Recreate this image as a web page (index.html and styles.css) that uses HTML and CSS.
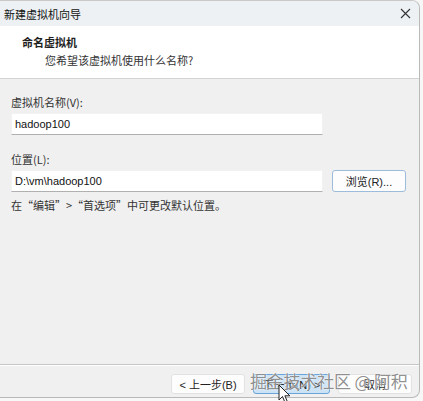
FILE: index.html
```html
<!DOCTYPE html>
<html lang="zh-CN">
<head>
  <meta charset="UTF-8" />
  <title>新建虚拟机向导</title>
  <link rel="stylesheet" href="styles.css">
</head>
<body>

<div class="window">
  <div class="titlebar">
    <span class="title">新建虚拟机向导</span>
    <svg class="close" width="11" height="11" viewBox="0 0 11 11">
      <path d="M1 1 L10 10 M10 1 L1 10" stroke="#333" stroke-width="1.1" fill="none" />
    </svg>
  </div>

  <div class="header">
    <div class="step">命名虚拟机</div>
    <div class="hint">您希望该虚拟机使用什么名称?</div>
  </div>

  <div class="content">
    <label class="label">虚拟机名称(V):</label>
    <div class="row">
      <input class="field" type="text" value="hadoop100" />
    </div>

    <label class="label">位置(L):</label>
    <div class="row">
      <input class="field" type="text" value="D:\vm\hadoop100" />
      <button class="btn browse">浏览(R)...</button>
    </div>
    <p class="note">在“编辑”>“首选项”中可更改默认位置。</p>
  </div>

  <div class="footer">
    <button class="btn">&lt; 上一步(B)</button>
    <button class="btn primary">下一步(N) &gt;</button>
    <button class="btn">取消</button>
  </div>
</div>

<!-- watermark and mouse pointer sit over the dialog -->
<div class="watermark">掘金技术社区 @ 阿积</div>
<svg class="pointer" width="13" height="20" viewBox="0 0 13 20">
  <path d="M1 1 L1 16 L4.5 12.5 L7 18.5 L9.3 17.5 L6.9 11.8 L11.8 11.8 Z" fill="#fff" stroke="#222" stroke-width="1" stroke-linejoin="round" />
</svg>

</body>
</html>
```

FILE: styles.css
```css
body {
  margin: 0;
  width: 423px;
  height: 401px;
  overflow: hidden;
  position: relative;
  background: #f7f7f7;
  font-family: "Liberation Sans", "Noto Sans CJK SC", sans-serif;
  font-size: 11px;
  color: #1e1e1e;
}

.window {
  width: 420px;
  height: 398px;
  display: flex;
  flex-direction: column;
  background: #f0f0f0;
  border-right: 1px solid #b9b9b9;
  border-bottom: 1px solid #b9b9b9;
  border-top: 1px solid #c9c9c9;
  border-radius: 0 8px 8px 0;
  overflow: hidden;
  box-sizing: border-box;
}

.titlebar {
  height: 25px;
  flex: none;
  display: flex;
  align-items: center;
  justify-content: space-between;
  padding: 0 8px 0 4px;
  background: #edf1f4;
}

.title {
  font-family: "Noto Sans CJK SC", sans-serif;
  font-size: 11px;
  color: #111;
}

.header {
  height: 53px;
  flex: none;
  background: #fff;
  border-bottom: 1px solid #d4d4d4;
  padding: 9px 0 0 22px;
  box-sizing: border-box;
  font-family: "Noto Sans CJK SC", sans-serif;
}

.step {
  font-weight: bold;
  font-size: 11px;
  line-height: 15px;
}

.hint {
  margin: 3px 0 0 23px;
  line-height: 15px;
  color: #333;
}

.content {
  flex: 1;
  padding: 16px 10px 0 11px;
}

.label {
  display: block;
  font-family: "Noto Sans CJK SC", sans-serif;
  line-height: 14px;
  color: #333;
}

.row {
  display: flex;
  align-items: center;
  gap: 9px;
  margin: 4px 0 17px;
}

.field {
  width: 312px;
  height: 22px;
  flex: none;
  box-sizing: border-box;
  margin: 0;
  padding: 0 3px;
  border: 1px solid #f2f2f2;
  border-bottom-color: #b0b0b0;
  background: #fff;
  font-family: "Liberation Sans", sans-serif;
  font-size: 11px;
  color: #111;
  outline: none;
}

.btn {
  height: 20px;
  padding: 0;
  width: 74px;
  flex: none;
  border: 1px solid #e2e2e2;
  border-radius: 3px;
  background: #fdfdfd;
  font-family: "Liberation Sans", "Noto Sans CJK SC", sans-serif;
  font-size: 11px;
  color: #222;
}

.browse {
  height: 22px;
  border-color: #9dbcdc;
}

.note {
  margin: 0;
  margin-top: -12px;
  font-family: "Noto Sans CJK SC", sans-serif;
  color: #333;
}

.footer {
  height: 33px;
  flex: none;
  display: flex;
  justify-content: flex-end;
  align-items: flex-start;
  gap: 8px;
  padding: 9px 7px 0 0;
  box-sizing: border-box;
  border-top: 1px solid #c6c6c6;
  box-shadow: inset 0 1px 0 #fff;
}

.primary {
  width: 77px;
  background: #cce3f6;
  border-color: #6aa4d8;
}

.watermark {
  position: absolute;
  left: 250px;
  top: 370px;
  font-family: "Noto Sans CJK SC", sans-serif;
  font-size: 17px;
  line-height: 22px;
  letter-spacing: -0.2px;
  color: rgba(70, 70, 70, 0.62);
  text-shadow: 0 0 1px #fff, 0 0 2px #fff;
}

.pointer {
  position: absolute;
  left: 278px;
  top: 384px;
}
```
